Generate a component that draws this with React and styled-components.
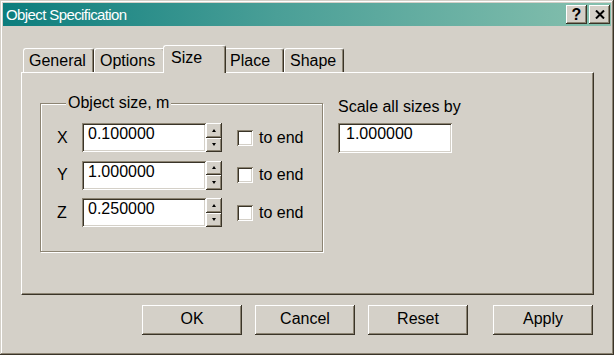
import React from "react";
import styled, { createGlobalStyle, css } from "styled-components";

// Colours of the classic 3D look
const face = "#d4d0c8";
const shadow = "#8c8473";
const darkShadow = "#3a3428";
const light = "#ffffff";

const raised = css`
  box-shadow: inset -1px -1px ${darkShadow}, inset 1px 1px ${light},
    inset -2px -2px ${shadow}, inset 2px 2px ${face};
`;
const sunken = css`
  box-shadow: inset 1px 1px ${shadow}, inset -1px -1px ${light},
    inset 2px 2px ${darkShadow}, inset -2px -2px ${face};
`;

const GlobalStyle = createGlobalStyle`
  html, body {
    margin: 0;
    padding: 0;
    background: ${face};
  }
  body {
    font-family: "Liberation Sans", Arial, sans-serif;
    font-size: 16px;
    color: #000;
  }
`;

// Styles
const Window = styled.div`
  width: 614px;
  height: 355px;
  box-sizing: border-box;
  padding: 3px;
  background: ${face};
  display: flex;
  flex-direction: column;
  box-shadow: inset -1px -1px ${darkShadow}, inset 1px 1px ${face},
    inset -2px -2px ${shadow}, inset 2px 2px ${light};
`;

const TitleBar = styled.div`
  height: 23px;
  display: flex;
  align-items: center;
  padding: 0 1px 0 3px;
  background: linear-gradient(90deg, #0c7d7d 0%, #4a9f97 45%, #86c0ae 100%);
  color: #fff;
`;

const TitleText = styled.div`
  flex: 1;
  font-size: 15px;
  letter-spacing: -0.6px;
`;

const CaptionButton = styled.div`
  width: 21px;
  height: 19px;
  box-sizing: border-box;
  margin-left: 2px;
  background: ${face};
  ${raised};
  display: flex;
  align-items: center;
  justify-content: center;
  color: #000;
  font-weight: bold;
  font-size: 16px;
  line-height: 1;
`;

const Body = styled.div`
  flex: 1;
  display: flex;
  flex-direction: column;
  padding: 19px 17px 0 18px;
`;

const TabRow = styled.div`
  display: flex;
  align-items: flex-end;
  height: 27px;
  padding-left: 2px;
  position: relative;
  z-index: 1;
`;

const Tab = styled.div`
  box-sizing: border-box;
  width: ${p => p.w}px;
  height: 24px;
  padding: 3px 0 0 5px;
  line-height: 18px;
  background: ${face};
  border-top: 1px solid ${light};
  border-left: 1px solid ${light};
  border-right: 1px solid ${darkShadow};
  border-radius: 3px 3px 0 0;
  box-shadow: inset -1px 0 ${shadow};
  ${p =>
    p.active &&
    css`
      position: relative;
      z-index: 2;
      width: ${p.w + 4}px;
      height: 28px;
      padding-left: 7px;
      margin: 0 -2px -1px;
    `}
`;

const Panel = styled.div`
  box-sizing: border-box;
  height: 223px;
  display: flex;
  align-items: flex-start;
  padding: 21px 0 0 18px;
  border-top: 1px solid ${light};
  border-left: 1px solid ${light};
  border-right: 1px solid ${darkShadow};
  border-bottom: 1px solid ${darkShadow};
  box-shadow: inset -1px -1px ${shadow};
`;

const GroupBox = styled.fieldset`
  box-sizing: border-box;
  width: 283px;
  margin: 0;
  padding: 11px 0 24px 16px;
  border: 1px solid ${shadow};
  box-shadow: inset 1px 1px ${light}, 1px 1px ${light};
  display: flex;
  flex-direction: column;
  gap: 8.5px;
`;

const GroupTitle = styled.legend`
  margin-left: 9px;
  padding: 0 2px;
  line-height: 18px;
  background: ${face};
`;

const FieldRow = styled.div`
  display: flex;
  align-items: center;
  height: 29px;
`;

const AxisLabel = styled.span`
  width: 25px;
`;

const TextBox = styled.div`
  box-sizing: border-box;
  width: ${p => p.w}px;
  height: ${p => p.h}px;
  padding: 2px ${p => p.pad}px 0;
  line-height: 18px;
  background: #fff;
  ${sunken};
`;

const Spinner = styled.div`
  width: 16px;
  height: 29px;
  display: flex;
  flex-direction: column;
`;

const SpinButton = styled.div`
  flex: 1;
  box-sizing: border-box;
  background: ${face};
  ${raised};
  display: flex;
  align-items: center;
  justify-content: center;

  &::after {
    content: "";
    border-left: 2.5px solid transparent;
    border-right: 2.5px solid transparent;
    ${p =>
      p.down
        ? css`border-top: 3px solid #000;`
        : css`border-bottom: 3px solid #000;`}
  }
`;

const CheckBox = styled.div`
  width: 16px;
  height: 16px;
  box-sizing: border-box;
  margin-left: 15px;
  background: #fff;
  ${sunken};
`;

const CheckLabel = styled.span`
  margin-left: 6px;
`;

const ScaleBlock = styled.div`
  display: flex;
  flex-direction: column;
  gap: 7px;
  margin-left: 15px;
  padding-top: 4px;
  line-height: 18px;
`;

const ButtonRow = styled.div`
  display: flex;
  justify-content: flex-end;
  margin-top: 10px;
  padding-right: 1px;
`;

const PushButton = styled.div`
  box-sizing: border-box;
  width: 100px;
  height: 30px;
  margin-left: ${p => p.gap}px;
  padding-bottom: 2px;
  background: ${face};
  ${raised};
  display: flex;
  align-items: center;
  justify-content: center;
`;

const CloseGlyph = () => (
  <svg width="10" height="9" viewBox="0 0 10 9">
    <path d="M1 0.5 L9 8.5 M9 0.5 L1 8.5" stroke="#000" strokeWidth="2" />
  </svg>
);

const tabs = [
  { label: "General", w: 71 },
  { label: "Options", w: 71 },
  { label: "Size", w: 59, active: true },
  { label: "Place", w: 60 },
  { label: "Shape", w: 60 },
];

const axes = [
  { axis: "X", value: "0.100000" },
  { axis: "Y", value: "1.000000" },
  { axis: "Z", value: "0.250000" },
];

const buttons = [
  { label: "OK", gap: 0 },
  { label: "Cancel", gap: 13 },
  { label: "Reset", gap: 13 },
  { label: "Apply", gap: 25 },
];

const App = () => {
  return (
    <>
      <GlobalStyle />
      <Window>
        <TitleBar>
          <TitleText>Object Specification</TitleText>
          <CaptionButton>?</CaptionButton>
          <CaptionButton>
            <CloseGlyph />
          </CaptionButton>
        </TitleBar>

        <Body>
          <TabRow>
            {tabs.map(t => (
              <Tab key={t.label} w={t.w} active={t.active}>
                {t.label}
              </Tab>
            ))}
          </TabRow>

          <Panel>
            <GroupBox>
              <GroupTitle>Object size, m</GroupTitle>
              {axes.map(a => (
                <FieldRow key={a.axis}>
                  <AxisLabel>{a.axis}</AxisLabel>
                  <TextBox w={124} h={29} pad={6}>
                    {a.value}
                  </TextBox>
                  <Spinner>
                    <SpinButton />
                    <SpinButton down />
                  </Spinner>
                  <CheckBox />
                  <CheckLabel>to end</CheckLabel>
                </FieldRow>
              ))}
            </GroupBox>

            <ScaleBlock>
              <span>Scale all sizes by</span>
              <TextBox w={114} h={30} pad={8}>
                1.000000
              </TextBox>
            </ScaleBlock>
          </Panel>

          <ButtonRow>
            {buttons.map(b => (
              <PushButton key={b.label} gap={b.gap}>
                {b.label}
              </PushButton>
            ))}
          </ButtonRow>
        </Body>
      </Window>
    </>
  );
};

export default App;
